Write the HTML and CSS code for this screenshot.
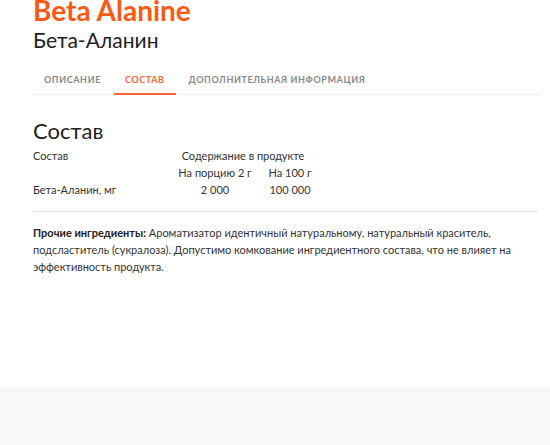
FILE: index.html
```html
<!DOCTYPE html>
<html lang="ru">
<head>
  <meta charset="UTF-8">
  <title>Beta Alanine</title>
  <meta name="viewport" content="width=device-width, initial-scale=1.0" />
  <link rel="stylesheet" href="styles.css">
</head>
<body>

<div class="product">
  <h1 class="product-title">Beta Alanine</h1>
  <div class="product-subtitle">Бета-Аланин</div>

  <ul class="tabs">
    <li class="tab">Описание</li>
    <li class="tab active">Состав</li>
    <li class="tab">Дополнительная информация</li>
  </ul>

  <h2 class="section-title">Состав</h2>

  <table class="facts">
    <tr>
      <td class="col-name">Состав</td>
      <td class="col-value" colspan="2">Содержание в продукте</td>
    </tr>
    <tr>
      <td class="col-name"></td>
      <td class="col-value col-serving">На порцию 2 г</td>
      <td class="col-value col-100">На 100 г</td>
    </tr>
    <tr>
      <td class="col-name">Бета-Аланин, мг</td>
      <td class="col-value">2 000</td>
      <td class="col-value">100 000</td>
    </tr>
  </table>

  <hr class="divider">

  <p class="other">
    <b>Прочие ингредиенты:</b> Ароматизатор идентичный натуральному, натуральный краситель,
    подсластитель (сукралоза). Допустимо комкование ингредиентного состава, что не влияет на
    эффективность продукта.
  </p>
</div>

<div class="footer"></div>

</body>
</html>
```

FILE: styles.css
```css
* {
  box-sizing: border-box;
}

body {
  font-family: Lato, "Open Sans", sans-serif;
  margin: 0;
  color: #333;
  background: #fff;
}

.product {
  display: flow-root;
  padding: 0 10px 0 33px;
  height: 388px;
}

.product-title {
  font-size: 28px;
  font-weight: 700;
  color: #fa5a14;
  line-height: 30px;
  margin: -5px 0 0;
}

.product-subtitle {
  font-size: 21px;
  color: #222;
  line-height: 24px;
  margin-top: 3px;
}

.tabs {
  list-style: none;
  display: flex;
  gap: 2px;
  margin: 21px 0 0;
  padding: 0;
  border-bottom: 1px solid #ececec;
}

.tab {
  font-size: 9px;
  font-weight: 700;
  text-transform: uppercase;
  letter-spacing: 0.6px;
  color: #888;
  padding: 0 11px 6px;
  line-height: 14px;
  border-bottom: 2px solid transparent;
  margin-bottom: -1px;
}

.tab.active {
  color: #f86431;
  border-bottom-color: #f86431;
}

.section-title {
  font-size: 22px;
  font-weight: 400;
  color: #222;
  line-height: 28px;
  margin: 22px 0 2px;
}

.facts {
  border-collapse: collapse;
  font-size: 11px;
  color: #333;
}

.facts td {
  padding: 0;
  height: 17px;
  line-height: 17px;
}

.col-name {
  width: 135px;
}

.col-value {
  text-align: center;
}

.col-serving {
  width: 94px;
}

.col-100 {
  width: 56px;
}

.divider {
  border: none;
  border-top: 1px solid #dedede;
  margin: 13px 2px 0 0;
}

.other {
  font-size: 11px;
  line-height: 17px;
  color: #333;
  margin: 12px 0 0;
}

.other b {
  color: #222;
}

.footer {
  height: 57px;
  background: #f7f8fa;
  border-top: 1px solid #f1f2f5;
}
```
